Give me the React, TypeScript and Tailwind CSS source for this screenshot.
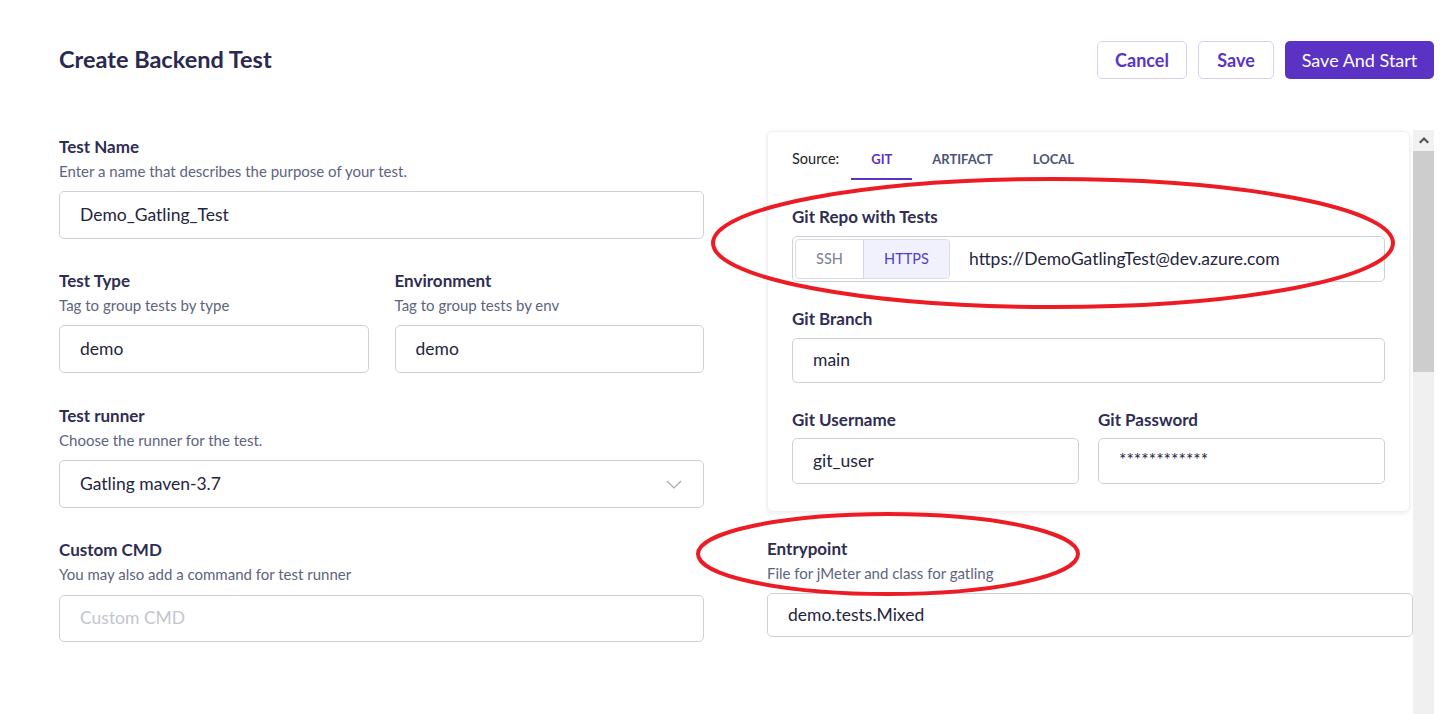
import React from "react";

const font = { fontFamily: "Lato, 'Noto Sans', sans-serif" };

const Field: React.FC<{
  label: string;
  hint?: string;
  value?: string;
  placeholder?: string;
  className?: string;
  inputClass?: string;
  children?: React.ReactNode;
}> = ({ label, hint, value, placeholder, className = "", inputClass = "h-12 mt-[10px]", children }) => (
  <div className={`flex flex-col ${className}`}>
    <div className="text-[17px] leading-6 font-bold text-[#2f2d52]">{label}</div>
    {hint && <div className="mt-[2px] text-[15px] leading-5 text-[#5d6480]">{hint}</div>}
    {children ?? (
      <div
        className={`flex items-center rounded-[5px] border border-[#cdd2da] bg-white px-5 text-[17.5px] ${inputClass} ${
          value ? "text-[#25253d]" : "text-[#c3c6cf]"
        }`}
      >
        {value ?? placeholder}
      </div>
    )}
  </div>
);

export default function App() {
  const tabs = ["GIT", "ARTIFACT", "LOCAL"];

  return (
    <div className="relative h-[714px] w-[1448px] overflow-hidden bg-white" style={font}>
      <div className="flex h-full flex-col pl-[59px] pr-[14px] pt-[41px]">
        {/* header */}
        <div className="flex items-center justify-between">
          <h1 className="mb-[3px] text-[23.5px] leading-7 font-bold text-[#2b2950]">Create Backend Test</h1>
          <div className="flex gap-[11px]">
            <button className="h-[38px] w-[90px] rounded-[5px] border border-[#d8cff5] text-[18px] font-bold text-[#5b34c6]">
              Cancel
            </button>
            <button className="h-[38px] w-[76px] rounded-[5px] border border-[#d8cff5] text-[18px] font-bold text-[#5b34c6]">
              Save
            </button>
            <button className="h-[38px] w-[149px] rounded-[5px] bg-[#5a32c4] text-[18px] text-white">
              Save And Start
            </button>
          </div>
        </div>

        {/* body */}
        <div className="mt-[51px] flex min-h-0 flex-1 gap-[63px]">
          {/* left */}
          <div className="flex w-[645px] flex-col pt-[5px]">
            <Field label="Test Name" hint="Enter a name that describes the purpose of your test." value="Demo_Gatling_Test" />
            <div className="mt-[30px] grid grid-cols-2 gap-[26px]">
              <Field label="Test Type" hint="Tag to group tests by type" value="demo" />
              <Field label="Environment" hint="Tag to group tests by env" value="demo" />
            </div>
            <Field label="Test runner" hint="Choose the runner for the test." className="mt-[31px]">
              <div className="mt-[10px] flex h-12 items-center justify-between rounded-[5px] border border-[#cdd2da] pl-5 pr-[21px] text-[17.5px] text-[#25253d]">
                <span>Gatling maven-3.7</span>
                <svg width="16" height="9" viewBox="0 0 16 9" fill="none">
                  <polyline points="1,1 8,8 15,1" stroke="#a3a7b3" strokeWidth="1.2" />
                </svg>
              </div>
            </Field>
            <Field
              label="Custom CMD"
              hint="You may also add a command for test runner"
              placeholder="Custom CMD"
              className="mt-[30px]"
              inputClass="h-[47px] mt-[11px]"
            />
          </div>

          {/* right */}
          <div className="flex flex-1">
            <div className="flex w-[646px] flex-col">
              <div className="mt-[1px] w-[643px] rounded-[6px] border border-[#eef0f4] px-[24px] pt-[8px] pb-[27px] shadow-[0_1px_4px_rgba(0,0,0,0.08)]">
                <div className="flex items-end">
                  <span className="mb-[10px] mr-3 text-[14.5px] text-[#222]">Source:</span>
                  <div className="flex">
                    {tabs.map((t, i) => (
                      <div
                        key={t}
                        className={`border-b-2 px-5 pt-[11px] pb-[11px] text-[13px] leading-4 font-bold ${
                          i === 0 ? "border-[#5a32c4] text-[#5a32c4]" : "border-transparent text-[#4b5377]"
                        }`}
                      >
                        {t}
                      </div>
                    ))}
                  </div>
                </div>

                <div className="mt-[25px] text-[17px] leading-6 font-bold text-[#2f2d52]">Git Repo with Tests</div>
                <div className="mt-[7px] flex h-[46px] items-center rounded-[5px] border border-[#cdd2da] p-[2px]">
                  <div className="flex h-full overflow-hidden rounded-[4px] border border-[#dcdee6] text-[14.5px]">
                    <div className="flex w-[67px] items-center justify-center text-[#7a8095]">SSH</div>
                    <div className="flex w-[86px] items-center justify-center border-l border-[#d6d2f0] bg-[#f1f0fd] text-[#4f3fc0]">
                      HTTPS
                    </div>
                  </div>
                  <span className="ml-[19px] text-[17.5px] text-[#25253d]">https://DemoGatlingTest@dev.azure.com</span>
                </div>

                <Field label="Git Branch" value="main" className="mt-[25px]" inputClass="h-[45px] mt-[7px]" />

                <div className="mt-[25px] grid grid-cols-2 gap-[19px]">
                  <Field label="Git Username" value="git_user" inputClass="h-[46px] mt-[6px]" />
                  <Field label="Git Password" value="************" inputClass="h-[46px] mt-[6px] text-[15px] pb-[2px]" />
                </div>
              </div>

              <Field
                label="Entrypoint"
                hint="File for jMeter and class for gatling"
                value="demo.tests.Mixed"
                className="mt-[25px]"
                inputClass="h-[44px] mt-[10px]"
              />
            </div>

            {/* scrollbar */}
            <div className="flex w-[21px] flex-col bg-[#f0f0f0]">
              <div className="flex h-[21px] items-center justify-center bg-[#f1f1f1]">
                <svg width="10" height="7" viewBox="0 0 10 7">
                  <polygon points="5,0 10,5 8.5,6.5 5,3 1.5,6.5 0,5" fill="#505050" />
                </svg>
              </div>
              <div className="h-[221px] bg-[#cdcdcd]" />
            </div>
          </div>
        </div>
      </div>

      {/* red annotation rings */}
      <svg className="pointer-events-none absolute left-0 top-0" width="1448" height="714">
        <ellipse cx="1053" cy="243" rx="340" ry="64" fill="none" stroke="#ed1c24" strokeWidth="4" />
        <ellipse cx="888" cy="554" rx="190" ry="40" fill="none" stroke="#ed1c24" strokeWidth="4" />
      </svg>
    </div>
  );
}
